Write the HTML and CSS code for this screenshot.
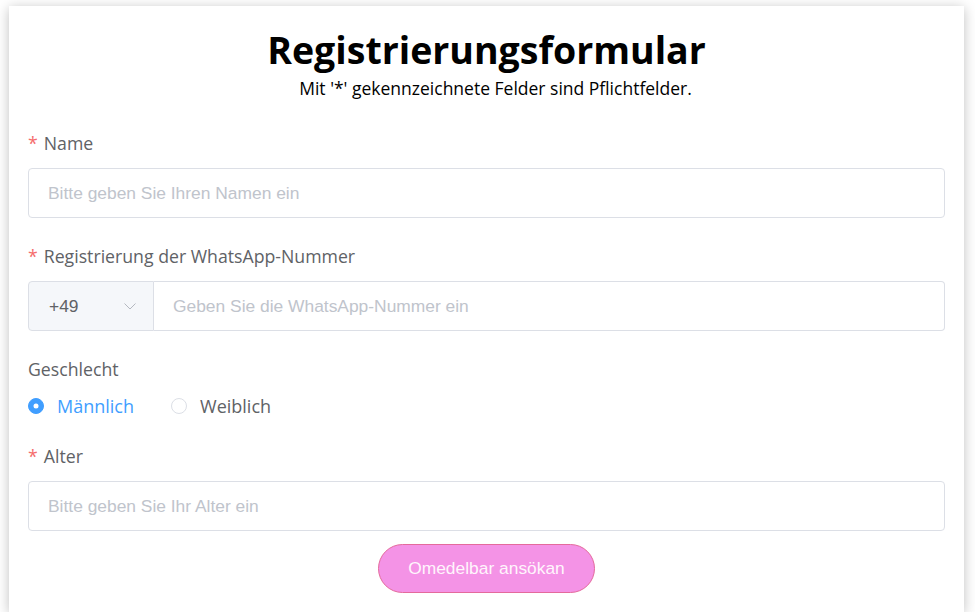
FILE: index.html
```html
<!DOCTYPE html>
<html lang="de">
<head>
    <meta charset="UTF-8">
    <meta name="viewport" content="width=device-width, initial-scale=1.0">
    <link rel="stylesheet" href="styles.css">
    <title>Registrierungsformular</title>
</head>
<body>
    <div class="card">
        <div class="head">
            <h1>Registrierungsformular</h1>
            <p>Mit '*' gekennzeichnete Felder sind Pflichtfelder.</p>
        </div>

        <form class="form" onsubmit="return false;">
            <div class="item">
                <label class="label required" for="name">Name</label>
                <input class="input" type="text" id="name" placeholder="Bitte geben Sie Ihren Namen ein">
            </div>

            <div class="item">
                <label class="label required" for="phone">Registrierung der WhatsApp-Nummer</label>
                <div class="group">
                    <div class="prefix">
                        <span>+49</span>
                        <svg width="12" height="7" viewBox="0 0 12 7"><polyline points="0.5,0.5 6,6 11.5,0.5" fill="none" stroke="#b4b8c0" stroke-width="1"/></svg>
                    </div>
                    <input class="input flat" type="tel" id="phone" placeholder="Geben Sie die WhatsApp-Nummer ein">
                </div>
            </div>

            <div class="item">
                <label class="label">Geschlecht</label>
                <div class="radios">
                    <label class="radio checked"><span class="dot"></span>Männlich</label>
                    <label class="radio"><span class="dot"></span>Weiblich</label>
                </div>
            </div>

            <div class="item">
                <label class="label required" for="age">Alter</label>
                <input class="input" type="text" id="age" placeholder="Bitte geben Sie Ihr Alter ein">
            </div>

            <div class="actions">
                <button type="submit" class="submit">Omedelbar ansökan</button>
            </div>
        </form>
    </div>
</body>
</html>
```

FILE: styles.css
```css
body {
    margin: 0;
    padding: 6px 11px 0 9px;
    background: #fff;
    font-family: "Open Sans", sans-serif;
}

.card {
    width: 955px;
    box-sizing: border-box;
    padding: 19px;
    background: #fff;
    box-shadow: 0 2px 12px rgba(0, 0, 0, 0.25);
}

.head {
    text-align: center;
}

.head h1 {
    margin: 0;
    font-size: 37.5px;
    line-height: 50px;
    font-weight: 700;
    color: #000;
}

.head p {
    margin: 0;
    padding-left: 18px;
    font-size: 17.5px;
    line-height: 26px;
    color: #000;
}

.form {
    margin-top: 25px;
}

.item {
    display: flex;
    flex-direction: column;
    gap: 8px;
    margin-bottom: 21px;
}

.label {
    font-size: 17.7px;
    line-height: 34px;
    color: #606266;
}

.required::before {
    content: "*";
    color: #f56c6c;
    margin-right: 6px;
}

.input {
    height: 50px;
    box-sizing: border-box;
    border: 1px solid #dcdfe6;
    border-radius: 4px;
    padding: 0 19px;
    font-family: "Liberation Sans", Arial, sans-serif;
    font-size: 17.4px;
    color: #606266;
    outline: none;
}

.input::placeholder {
    color: #c0c4cc;
}

.group {
    display: flex;
    height: 50px;
}

.prefix {
    width: 126px;
    box-sizing: border-box;
    display: flex;
    align-items: center;
    justify-content: space-between;
    padding: 0 17px 0 20px;
    background: #f5f7fa;
    border: 1px solid #dcdfe6;
    border-radius: 4px 0 0 4px;
    font-family: "Liberation Sans", Arial, sans-serif;
    font-size: 17.4px;
    color: #606266;
}

.input.flat {
    flex: 1;
    border-left: none;
    border-radius: 0 4px 4px 0;
}

.radios {
    display: flex;
    gap: 37px;
    height: 24px;
    align-items: center;
}

.radio {
    display: flex;
    align-items: center;
    gap: 13px;
    font-size: 18px;
    color: #606266;
}

.dot {
    width: 16px;
    height: 16px;
    box-sizing: border-box;
    border: 1px solid #dcdfe6;
    border-radius: 50%;
    background: #fff;
    position: relative;
}

.radio.checked {
    color: #409eff;
}

.radio.checked .dot {
    background: #409eff;
    border-color: #409eff;
}

.radio.checked .dot::after {
    content: "";
    position: absolute;
    left: 50%;
    top: 50%;
    width: 5px;
    height: 5px;
    border-radius: 50%;
    background: #fff;
    transform: translate(-50%, -50%);
}

.actions {
    display: flex;
    justify-content: center;
    margin-top: -8px;
}

.submit {
    width: 217px;
    height: 49px;
    border: 1px solid #e46a9c;
    border-radius: 25px;
    background: #f493e6;
    color: #fff5fc;
    font-family: "Liberation Sans", Arial, sans-serif;
    font-size: 17.4px;
}
```
